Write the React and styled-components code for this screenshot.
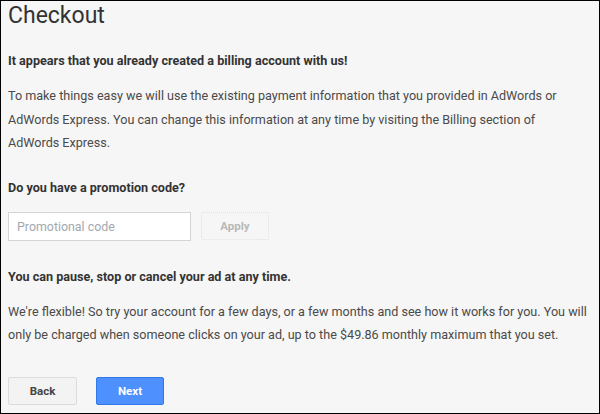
import React from "react";
import styled, { createGlobalStyle } from "styled-components";

const GlobalStyle = createGlobalStyle`
  html, body {
    margin: 0;
    padding: 0;
    background: #f6f6f6;
  }
  * {
    box-sizing: border-box;
  }
`;

const Page = styled.div`
  width: 600px;
  height: 414px;
  border: 1px solid #000;
  background-color: #f6f6f6;
  padding: 1px 2px 0 7px;
  font-family: Roboto, "Liberation Sans", Arial, sans-serif;
  color: #444;
  overflow: hidden;
`;

const Title = styled.h1`
  margin: 0;
  font-size: 23px;
  line-height: 28px;
  font-weight: 400;
  color: #333;
`;

const Heading = styled.h3`
  margin: ${(p) => p.$top}px 0 0;
  font-size: 12.6px;
  line-height: 20px;
  font-weight: 700;
  color: #333;
`;

const Text = styled.p`
  margin: ${(p) => p.$top}px 0 0;
  font-size: 12.6px;
  line-height: 23.5px;
  color: #4a4a4a;
  white-space: nowrap;
`;

const PromoRow = styled.div`
  display: flex;
  align-items: center;
  gap: 10px;
  margin-top: 14px;
`;

const Input = styled.input`
  width: 183px;
  height: 29px;
  border: 1px solid #d4d4d4;
  background: #fff;
  padding: 0 8px;
  font-family: Roboto, "Liberation Sans", Arial, sans-serif;
  font-size: 12.4px;
  color: #333;
  outline: none;
  &::placeholder {
    color: #a3a8b0;
  }
`;

const Button = styled.button`
  height: 28px;
  width: ${(p) => p.$w || 69}px;
  font-family: Roboto, "Liberation Sans", Arial, sans-serif;
  font-size: 11.5px;
  font-weight: 700;
  border-radius: 2px;
  cursor: pointer;
  padding: 0;
  border: 1px solid ${(p) => (p.$primary ? "#3079ed" : "#dcdcdc")};
  background: ${(p) => (p.$primary ? "#4d90fe" : "#f3f3f3")};
  color: ${(p) => (p.$primary ? "#fff" : "#444")};
  &:disabled {
    background: transparent;
    border: 1px dotted #e0e0e0;
    color: #b8b8b8;
    cursor: default;
  }
`;

const Actions = styled.div`
  display: flex;
  gap: 19px;
  margin-top: 30px;
`;

export default function App() {
  return (
    <>
      <GlobalStyle />
      <Page>
        <Title>Checkout</Title>
        <Heading $top={21}>It appears that you already created a billing account with us!</Heading>
        <Text $top={13}>
          To make things easy we will use the existing payment information that you provided in AdWords or
          <br />
          AdWords Express. You can change this information at any time by visiting the Billing section of
          <br />
          AdWords Express.
        </Text>
        <Heading $top={23}>Do you have a promotion code?</Heading>
        <PromoRow>
          <Input placeholder="Promotional code" />
          <Button $w={68} disabled>
            Apply
          </Button>
        </PromoRow>
        <Heading $top={26}>You can pause, stop or cancel your ad at any time.</Heading>
        <Text $top={13}>
          We're flexible! So try your account for a few days, or a few months and see how it works for you. You will
          <br />
          only be charged when someone clicks on your ad, up to the $49.86 monthly maximum that you set.
        </Text>
        <Actions>
          <Button>Back</Button>
          <Button $primary $w={68}>
            Next
          </Button>
        </Actions>
      </Page>
    </>
  );
}
